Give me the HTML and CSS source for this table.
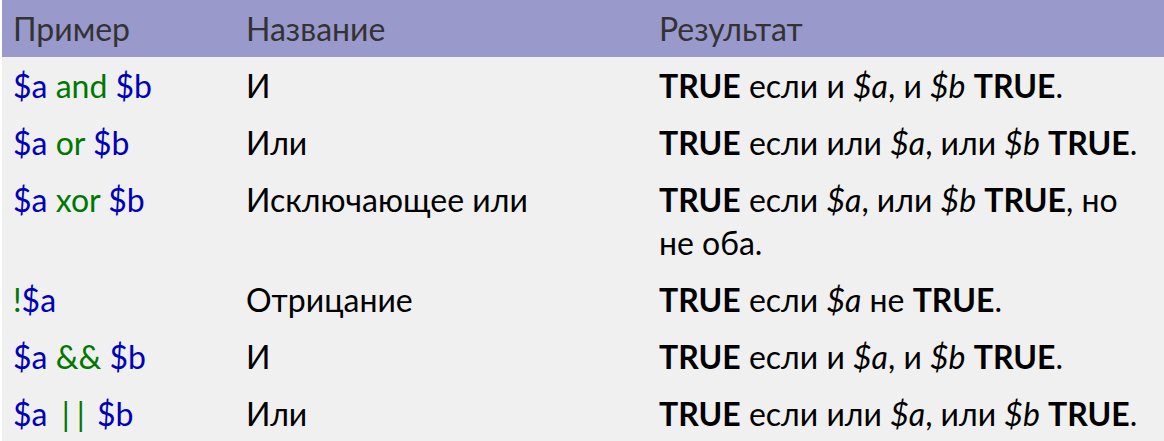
FILE: index.html
```html
<!DOCTYPE html>
<html lang="ru">
<head>
<meta charset="utf-8">
<link rel="stylesheet" href="styles.css">
</head>
<body>
<div class="wrap">
<table class="ops">
  <colgroup><col class="c1"><col class="c2"><col class="c3"></colgroup>
  <thead>
    <tr><th>Пример</th><th>Название</th><th>Результат</th></tr>
  </thead>
  <tbody>
    <tr><td><span class="v">$a</span> <span class="k">and</span> <span class="v">$b</span></td><td>И</td><td><b>TRUE</b> если и <i>$a</i>, и <i>$b</i> <b>TRUE</b>.</td></tr>
    <tr><td><span class="v">$a</span> <span class="k">or</span> <span class="v">$b</span></td><td>Или</td><td><b>TRUE</b> если или <i>$a</i>, или <i>$b</i> <b>TRUE</b>.</td></tr>
    <tr><td><span class="v">$a</span> <span class="k">xor</span> <span class="v">$b</span></td><td>Исключающее или</td><td><b>TRUE</b> если <i>$a</i>, или <i>$b</i> <b>TRUE</b>, но<br>не оба.</td></tr>
    <tr><td><span class="k">!</span><span class="v">$a</span></td><td>Отрицание</td><td><b>TRUE</b> если <i>$a</i> не <b>TRUE</b>.</td></tr>
    <tr><td><span class="v">$a</span> <span class="k">&amp;&amp;</span> <span class="v">$b</span></td><td>И</td><td><b>TRUE</b> если и <i>$a</i>, и <i>$b</i> <b>TRUE</b>.</td></tr>
    <tr><td><span class="v">$a</span> <span class="k bars">||</span> <span class="v">$b</span></td><td>Или</td><td><b>TRUE</b> если или <i>$a</i>, или <i>$b</i> <b>TRUE</b>.</td></tr>
  </tbody>
</table>
</div>
</body>
</html>
```
FILE: styles.css
```css
html, body {
  margin: 0;
  padding: 0;
  background: #ffffff;
}
.wrap {
  padding-left: 2px;
  height: 441px;
  overflow: hidden;
}
.ops {
  width: 1162px;
  border-collapse: collapse;
  table-layout: fixed;
  font-family: Lato, "Open Sans", sans-serif;
  font-size: 32px;
  line-height: 43px;
  color: #000;
  background: #f0f0f0;
}
.c1 { width: 233px; }
.c2 { width: 413px; }
.c3 { width: 516px; }
.ops th, .ops td {
  text-align: left;
  vertical-align: top;
  padding: 7px 0 7px 11px;
  white-space: nowrap;
}
.ops th {
  background: #9999cc;
  color: #333333;
  font-weight: normal;
}
.v { color: #0000bb; }
.k { color: #007700; }
.bars {
  margin-left: 6px;
  margin-right: -3px;
  letter-spacing: 7px;
}
.ops b { font-weight: bold; }
```
